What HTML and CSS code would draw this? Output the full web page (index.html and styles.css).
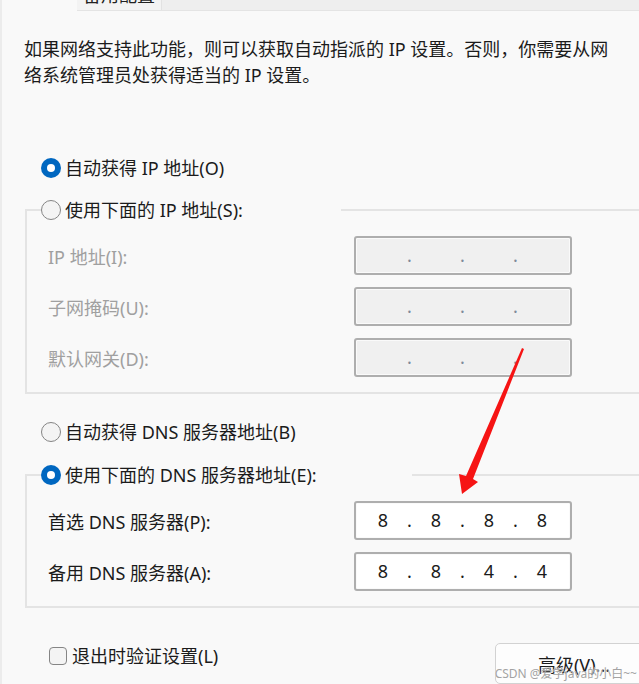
FILE: index.html
```html
<!DOCTYPE html>
<html lang="zh-CN">
<head>
<meta charset="utf-8">
<title>Internet 协议版本 4 (TCP/IPv4) 属性</title>
<link rel="stylesheet" href="styles.css">
</head>
<body>
<div class="window">
  <div class="tabstrip">
    <div class="tab"><span class="tab-label">备用配置</span></div>
  </div>

  <p class="desc">如果网络支持此功能，则可以获取自动指派的 IP 设置。否则，你需要从网络系统管理员处获得适当的 IP 设置。</p>

  <div class="radio-row first-radio"><span class="radio checked"></span><span>自动获得 IP 地址(O)</span></div>

  <fieldset class="group group-ip">
    <legend class="legend legend-ip"><span class="radio-row"><span class="radio"></span><span>使用下面的 IP 地址(S):</span></span></legend>
    <div class="field disabled">
      <span class="label">IP 地址(I):</span>
      <span class="ipbox off"><span class="oct"></span><span class="dot">.</span><span class="oct"></span><span class="dot">.</span><span class="oct"></span><span class="dot">.</span><span class="oct"></span></span>
    </div>
    <div class="field disabled">
      <span class="label">子网掩码(U):</span>
      <span class="ipbox off"><span class="oct"></span><span class="dot">.</span><span class="oct"></span><span class="dot">.</span><span class="oct"></span><span class="dot">.</span><span class="oct"></span></span>
    </div>
    <div class="field disabled">
      <span class="label">默认网关(D):</span>
      <span class="ipbox off"><span class="oct"></span><span class="dot">.</span><span class="oct"></span><span class="dot">.</span><span class="oct"></span><span class="dot">.</span><span class="oct"></span></span>
    </div>
  </fieldset>

  <div class="radio-row dns-auto"><span class="radio"></span><span>自动获得 DNS 服务器地址(B)</span></div>

  <fieldset class="group group-dns">
    <legend class="legend legend-dns"><span class="radio-row"><span class="radio checked"></span><span>使用下面的 DNS 服务器地址(E):</span></span></legend>
    <div class="field">
      <span class="label">首选 DNS 服务器(P):</span>
      <span class="ipbox"><span class="oct">8</span><span class="dot">.</span><span class="oct">8</span><span class="dot">.</span><span class="oct">8</span><span class="dot">.</span><span class="oct">8</span></span>
    </div>
    <div class="field">
      <span class="label">备用 DNS 服务器(A):</span>
      <span class="ipbox"><span class="oct">8</span><span class="dot">.</span><span class="oct">8</span><span class="dot">.</span><span class="oct">4</span><span class="dot">.</span><span class="oct">4</span></span>
    </div>
  </fieldset>

  <div class="footer">
    <span class="check-row"><span class="checkbox"></span><span>退出时验证设置(L)</span></span>
    <button class="adv" type="button">高级(V)...</button>
  </div>

  <div class="watermark">CSDN @爱学java的小白~~</div>

  <svg class="arrow" width="639" height="684" viewBox="0 0 639 684" aria-hidden="true">
    <polygon points="522,348 524,349 473,479 478,482 462,494 459,474 466,476" fill="#f61414"/>
  </svg>
</div>
</body>
</html>
```

FILE: styles.css
```css
html, body {
  margin: 0;
  padding: 0;
  height: 684px;
  overflow: hidden;
  background: #f9f9f9;
}

body {
  font-family: "Noto Sans", "Noto Sans CJK SC", sans-serif;
  font-size: 18px;
  color: #1b1b1b;
}

.window {
  position: relative;
  height: 684px;
  border-left: 2px solid #ececec;
  box-sizing: border-box;
}

/* top tab strip */
.tabstrip {
  margin-left: 75px;
  height: 10px;
  background: #eeeeee;
  border-bottom: 1px solid #e4e4e4;
  display: flex;
}

.tab {
  width: 84px;
  height: 10px;
  background: #f3f3f3;
  border-right: 1px solid #e2e2e2;
  overflow: hidden;
  display: flex;
  justify-content: center;
}

.tab-label {
  display: block;
  line-height: 18px;
  margin-top: -14px;
  color: #222;
}

/* description */
.desc {
  margin: 25px 0 0 22px;
  width: 600px;
  line-height: 26px;
}

/* radio rows */
.radio-row {
  display: flex;
  align-items: center;
  gap: 4px;
  line-height: 26px;
  height: 26px;
  white-space: nowrap;
}

.first-radio {
  margin: 67px 0 0 39px;
}

.dns-auto {
  margin: 25px 0 0 39px;
}

.radio {
  width: 20px;
  height: 20px;
  border-radius: 50%;
  box-sizing: border-box;
  border: 1.5px solid #858585;
  background: #f4f4f4;
  flex: none;
  display: flex;
  align-items: center;
  justify-content: center;
}

.radio.checked {
  border: none;
  background: #0067c0;
}

.radio.checked::after {
  content: "";
  width: 8px;
  height: 8px;
  border-radius: 50%;
  background: #fff;
}

/* group boxes */
.group {
  margin: 0 -40px 0 23px;
  border: 2px solid #e4e4e4;
  padding: 13px 0 14px 21px;
  min-width: 0;
}

.group-ip {
  margin-top: 16px;
  padding-bottom: 15px;
}

.group-dns {
  margin-top: 17px;
  padding-bottom: 15px;
}

.legend {
  padding: 0;
  margin-left: -7px;
  height: 26px;
}

.legend-ip {
  width: 300px;
}

.legend-dns {
  width: 371px;
}

.field {
  display: grid;
  grid-template-columns: 306px 218px;
  align-items: center;
  height: 39px;
}

.field + .field {
  margin-top: 12px;
}

.disabled .label {
  color: #a0a0a0;
}

/* ip boxes */
.ipbox {
  height: 39px;
  box-sizing: border-box;
  border: 2px solid #aeaeae;
  border-radius: 3px;
  background: #ffffff;
  box-shadow: inset 0 0 0 1px #fafafa;
  display: flex;
  align-items: center;
  padding-left: 8px;
  line-height: 35px;
}

.ipbox.off {
  background: #f0f0f0;
}

.oct {
  width: 38px;
  text-align: center;
}

.dot {
  width: 15px;
  text-align: center;
}

.off .dot {
  color: #7d8a99;
}

/* footer */
.footer {
  display: flex;
  align-items: flex-start;
  margin-top: 35px;
  padding-left: 47px;
}

.check-row {
  display: flex;
  align-items: center;
  gap: 5px;
  line-height: 26px;
  height: 26px;
}

.checkbox {
  width: 18px;
  height: 18px;
  box-sizing: border-box;
  border: 1.5px solid #858585;
  border-radius: 4px;
  background: #f4f4f4;
}

.adv {
  margin-left: auto;
  margin-right: -14px;
  width: 158px;
  height: 41px;
  box-sizing: border-box;
  border: 1px solid #d2d2d2;
  border-radius: 5px;
  background: #fdfdfd;
  font: inherit;
  color: #1b1b1b;
  padding: 0;
}

/* overlays */
.watermark {
  position: absolute;
  right: 2px;
  bottom: 3px;
  font-size: 12px;
  line-height: 14px;
  color: #a3a3a3;
  text-shadow: 0 0 1px #fff;
  white-space: nowrap;
}

.arrow {
  position: absolute;
  left: -2px;
  top: 0;
  pointer-events: none;
}
```
